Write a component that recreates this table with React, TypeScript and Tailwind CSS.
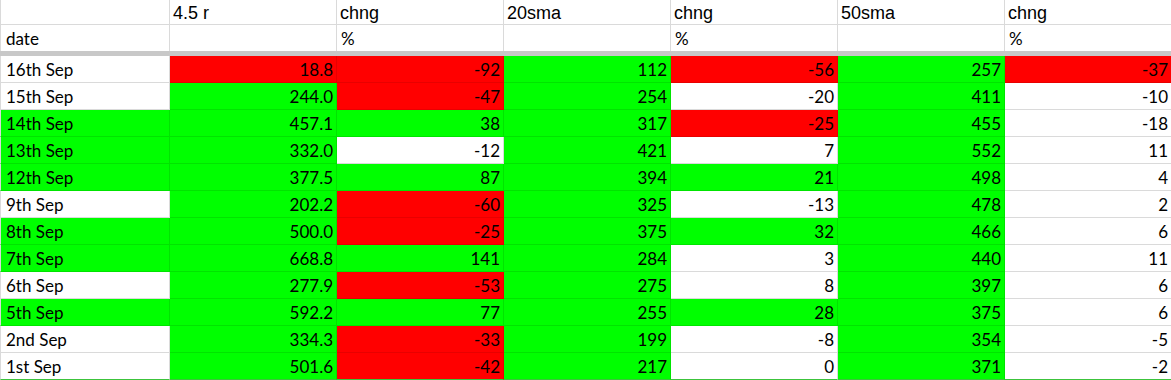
import React from "react";

type C = "w" | "g" | "r";
type Row = { d: string; dc: C; v: [string, C][] };

const rows: Row[] = [
  { d: "16th Sep", dc: "w", v: [["18.8", "r"], ["-92", "r"], ["112", "g"], ["-56", "r"], ["257", "g"], ["-37", "r"]] },
  { d: "15th Sep", dc: "w", v: [["244.0", "g"], ["-47", "r"], ["254", "g"], ["-20", "w"], ["411", "g"], ["-10", "w"]] },
  { d: "14th Sep", dc: "g", v: [["457.1", "g"], ["38", "g"], ["317", "g"], ["-25", "r"], ["455", "g"], ["-18", "w"]] },
  { d: "13th Sep", dc: "g", v: [["332.0", "g"], ["-12", "w"], ["421", "g"], ["7", "w"], ["552", "g"], ["11", "w"]] },
  { d: "12th Sep", dc: "g", v: [["377.5", "g"], ["87", "g"], ["394", "g"], ["21", "g"], ["498", "g"], ["4", "w"]] },
  { d: "9th Sep", dc: "w", v: [["202.2", "g"], ["-60", "r"], ["325", "g"], ["-13", "w"], ["478", "g"], ["2", "w"]] },
  { d: "8th Sep", dc: "g", v: [["500.0", "g"], ["-25", "r"], ["375", "g"], ["32", "g"], ["466", "g"], ["6", "w"]] },
  { d: "7th Sep", dc: "g", v: [["668.8", "g"], ["141", "g"], ["284", "g"], ["3", "w"], ["440", "g"], ["11", "w"]] },
  { d: "6th Sep", dc: "w", v: [["277.9", "g"], ["-53", "r"], ["275", "g"], ["8", "w"], ["397", "g"], ["6", "w"]] },
  { d: "5th Sep", dc: "g", v: [["592.2", "g"], ["77", "g"], ["255", "g"], ["28", "g"], ["375", "g"], ["6", "w"]] },
  { d: "2nd Sep", dc: "w", v: [["334.3", "g"], ["-33", "r"], ["199", "g"], ["-8", "w"], ["354", "g"], ["-5", "w"]] },
  { d: "1st Sep", dc: "w", v: [["501.6", "g"], ["-42", "r"], ["217", "g"], ["0", "w"], ["371", "g"], ["-2", "w"]] },
];

const cls: Record<C, string> = {
  w: "bg-white border-[#dadada]",
  g: "bg-[#00ff00] border-[#00e400]",
  r: "bg-[#ff0000] border-[#e80000]",
};

const headers = ["4.5 r", "chng", "20sma", "chng", "50sma", "chng"];
const sub = ["", "%", "", "%", "", "%"];

export default function App() {
  return (
    <div className="w-[1171px] h-[380px] overflow-hidden bg-white text-black">
      <div className="grid grid-cols-[170px_repeat(6,167px)]">
        <div className="h-[25px] border-l border-r border-b border-[#dadada]" />
        {headers.map((h, i) => (
          <div key={i} className="h-[25px] border-r border-b border-[#dadada] flex items-center pl-[3px] pt-[1px] whitespace-nowrap">
            <span className="font-['Liberation_Sans'] text-[18px] leading-none">{h}</span>
          </div>
        ))}
      </div>
      <div className="grid grid-cols-[170px_repeat(6,167px)] font-['Lato',sans-serif] text-[17px]">
        <div className="h-[26px] border-l border-r border-[#dadada] flex items-center pl-[5px] pt-[2px]">date</div>
        {sub.map((s, i) => (
          <div key={i} className="h-[26px] border-r border-[#dadada] flex items-center pl-[4px] pt-[2px]">
            {s}
          </div>
        ))}
      </div>
      <div className="h-[5px] bg-[#c8c8c8]" />
      <div className="font-['Lato',sans-serif] text-[17px]">
        {rows.map((r, ri) => {
          const last = ri === rows.length - 1;
          return (
            <div key={ri} className="grid grid-cols-[170px_repeat(6,167px)]">
              <div
                className={`h-[27px] border-r border-b flex items-center pl-[5px] pt-[1px] whitespace-nowrap border-l border-l-[#dadada] ${cls[r.dc]} ${last ? "border-b-[#3cc43c]" : ""}`}
              >
                {r.d}
              </div>
              {r.v.map(([t, c], ci) => (
                <div
                  key={ci}
                  className={`h-[27px] border-r border-b flex items-center justify-end pr-[3px] pt-[1px] ${cls[c]} ${last ? "border-b-[#3cc43c]" : ""}`}
                >
                  {t}
                </div>
              ))}
            </div>
          );
        })}
      </div>
    </div>
  );
}
